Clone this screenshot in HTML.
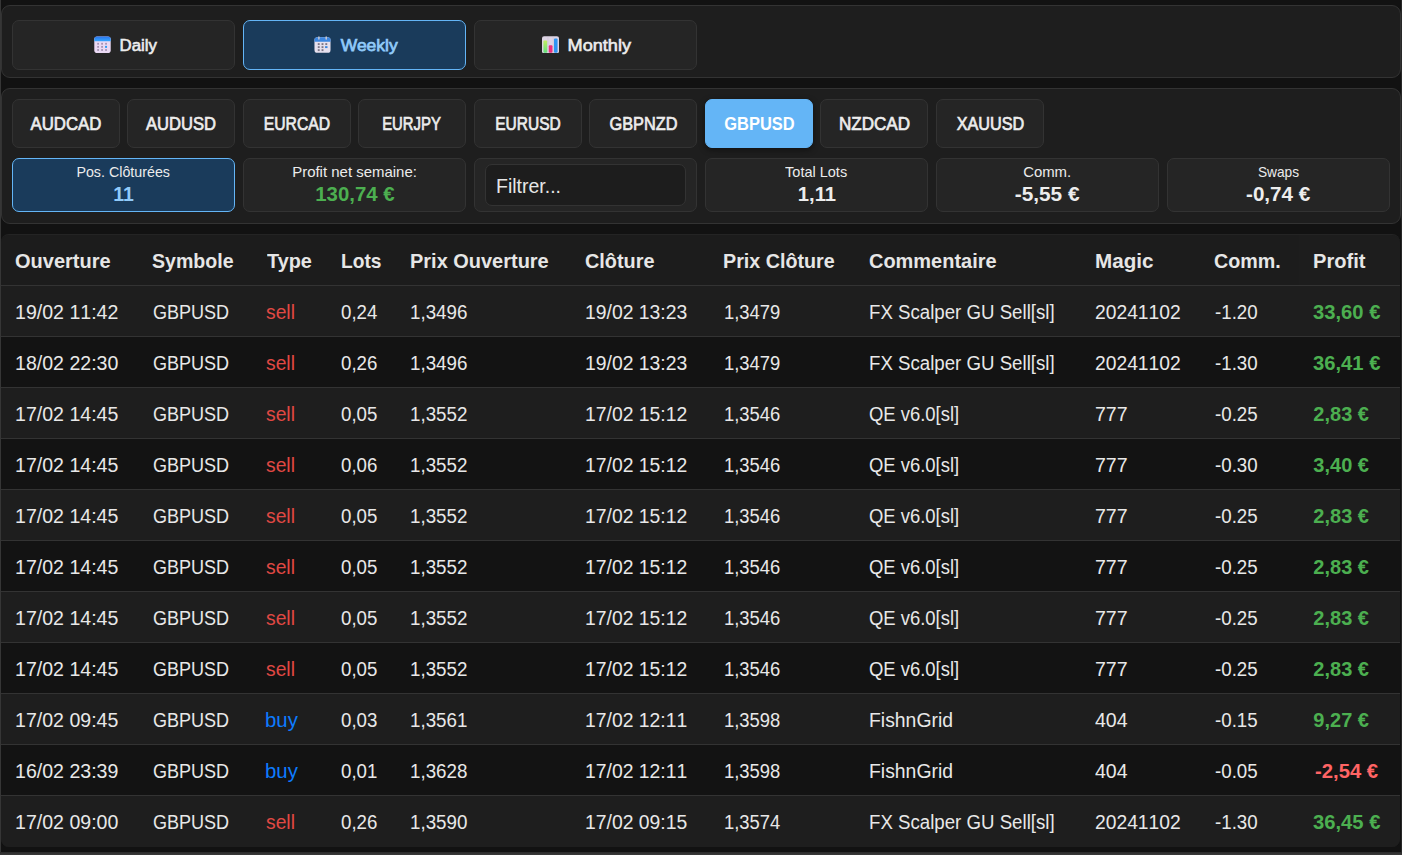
<!DOCTYPE html>
<html lang="fr">
<head>
<meta charset="utf-8">
<title>Trades</title>
<style>
*{box-sizing:border-box;margin:0;padding:0}
html,body{width:1402px;height:855px;overflow:hidden;background:#121212}
body{font-family:"Liberation Sans",sans-serif;color:#e6e6e6;position:relative}
.x{display:inline-block;transform-origin:0 50%;white-space:nowrap}
.c{display:inline-block;transform-origin:50% 50%;white-space:nowrap}
.edge-l{position:absolute;left:0;top:0;width:1px;height:855px;background:#363636}
.edge-b{position:absolute;left:0;top:852px;width:1402px;height:3px;background:linear-gradient(#2a2a2a,#3a3a3a)}
.edge-r{position:absolute;left:1401px;top:0;width:1px;height:852px;background:#282828}
.panel{position:absolute;left:1px;width:1400px;background:#1e1e1e;border:1px solid #333;border-radius:9px}
#p1{top:5px;height:73px}
#p2{top:88px;height:136px}
.tabs{position:absolute;left:10px;top:14px;width:1378px;display:grid;grid-template-columns:repeat(6,223px);column-gap:8px}
.tab{height:50px;background:#252525;border:1px solid #333;border-radius:7px;display:flex;align-items:center;justify-content:center;font-size:17.3px;color:#ededed;-webkit-text-stroke:.6px currentColor;padding:1px 0 0 3px}
.tab svg{width:17px;height:17.5px;margin-right:8.5px;flex:none;margin-top:-2px;position:relative;left:.7px}
.tab.on{background:#1a3b5b;border-color:#64b5f6;color:#90caf9;-webkit-text-stroke-width:.75px}
.syms{position:absolute;left:0;top:10px;width:1378px;height:49px}
.sym{position:absolute;top:0;width:108px;height:49px;background:#252525;border:1px solid #333;border-radius:7px;display:flex;align-items:center;justify-content:center;font-size:17.5px;color:#ededed;-webkit-text-stroke:.65px currentColor;padding-top:1px}
.sym.on{background:#64b5f6;border-color:#64b5f6;color:#fff;box-shadow:0 2px 6px rgba(0,0,0,.45);-webkit-text-stroke:0;font-weight:700}
.stats{position:absolute;left:10px;top:69px;width:1378px;display:grid;grid-template-columns:repeat(6,223px);column-gap:8px}
.stat{height:54px;background:#252525;border:1px solid #333;border-radius:7px;text-align:center}
.stat .l{font-size:15px;line-height:17px;margin-top:3.5px;color:#ececec}
.stat .v{font-size:20px;line-height:24px;font-weight:700;margin-top:2.5px;color:#ededed}
.stat.on{background:#1a3b5b;border-color:#64b5f6}
.stat.on .v{color:#90caf9}
.stat .v.g{color:#4caf50}
.stat.f{padding:5px 10px}
.inp{height:42px;background:#1d1d1d;border:1px solid #333;border-radius:7px;text-align:left;font-size:20.4px;line-height:42px;padding-left:10px;color:#e6e6e6;overflow:hidden}
table{position:absolute;left:1px;top:234px;width:1399px;border-collapse:separate;border-spacing:0;table-layout:fixed;background:#1c1c1c;border-radius:8px;overflow:hidden;border-top:1px solid #242424}
th,td{height:51px;text-align:left;padding:3px 0 0 14px;font-size:20px;white-space:nowrap;border-bottom:1px solid #333;vertical-align:middle}
th{font-weight:700;color:#e6e6e6;background:#1c1c1c;font-size:20.5px}
th{padding-top:2px}
th:last-child{background:#1d1d1d}
tbody tr:nth-child(odd) td{background:#1e1e1e}
tbody tr:nth-child(even) td{background:#131313}
tbody tr:last-child td{border-bottom-color:#1e1e1e}
td{color:#e8e8e8;font-kerning:none}
.s{color:#e04843}
.b{color:#0d7bff}
.p{color:#4caf50;font-weight:700}
.n{color:#ff6464;font-weight:700}
</style>
</head>
<body>
<div class="panel" id="p1">
 <div class="tabs">
  <div class="tab"><svg viewBox="0 0 18 18"><defs><linearGradient id="gd" x1="0" y1="0" x2="0" y2="1"><stop offset="0" stop-color="#2a74ee"/><stop offset="1" stop-color="#36a8ff"/></linearGradient></defs><rect x="0.3" y="0.3" width="17.4" height="17.4" rx="3" fill="#ead9f4"/><path d="M0.3 5.3V3.3a3 3 0 0 1 3-3h11.4a3 3 0 0 1 3 3v2z" fill="url(#gd)"/><g fill="#a492b2"><rect x="3.4" y="7" width="1.9" height="1.9"/><rect x="7.6" y="7" width="1.9" height="1.9"/><rect x="11.8" y="7" width="1.9" height="1.9"/><rect x="3.4" y="10.3" width="1.9" height="1.9"/><rect x="7.6" y="10.3" width="1.9" height="1.9"/><rect x="3.4" y="13.6" width="1.9" height="1.9"/><rect x="7.6" y="13.6" width="1.9" height="1.9"/><rect x="11.8" y="13.6" width="1.9" height="1.9"/></g><rect x="11.7" y="10.2" width="2.1" height="2.1" fill="#2f9bf6"/></svg><span class="c" style="transform:scaleX(0.973)">Daily</span></div>
  <div class="tab on"><svg style="left:-1.3px" viewBox="0 0 18 18"><rect x="0.5" y="1" width="17" height="16.5" rx="3" fill="#e6e0ee"/><path d="M0.5 5.8V4a3 3 0 0 1 3-3h11a3 3 0 0 1 3 3v1.8z" fill="#3c86e0"/><rect x="4.5" y="0" width="1.4" height="3.6" rx=".7" fill="#d8d0d0"/><rect x="12.2" y="0" width="1.4" height="3.6" rx=".7" fill="#d8d0d0"/><g fill="#7d7686"><rect x="4" y="7.3" width="2" height="2"/><rect x="8" y="7.3" width="2" height="2"/><rect x="12" y="7.3" width="2" height="2"/><rect x="4" y="10.5" width="2" height="2"/><rect x="8" y="10.5" width="2" height="2"/><rect x="4" y="13.7" width="2" height="2"/><rect x="8" y="13.7" width="2" height="2"/></g><rect x="11.7" y="10.5" width="2.6" height="2" fill="#3c86e0"/></svg><span class="c" style="transform:scaleX(1.010)">Weekly</span></div>
  <div class="tab"><svg style="left:-2.3px" viewBox="0 0 18 18"><rect x="0" y="0" width="18" height="18" rx="2.2" fill="#ddd4e4"/><path d="M6.3 0.5v17M11.9 0.5v17" stroke="#cdc3d6" stroke-width=".6"/><defs><linearGradient id="gm" x1="0" y1="0" x2="0" y2="1"><stop offset="0" stop-color="#c4ec62"/><stop offset="1" stop-color="#5fe07a"/></linearGradient></defs><rect x="1.5" y="4.5" width="4" height="13" rx="1" fill="url(#gm)"/><rect x="7.2" y="9.6" width="3.9" height="7.9" rx="1" fill="#ee2f7c"/><rect x="12.7" y="2.4" width="3.8" height="15.1" rx="1" fill="#2f95f3"/></svg><span class="c" style="transform:scaleX(1.048)">Monthly</span></div>
 </div>
</div>
<div class="panel" id="p2">
 <div class="syms"><div class="sym" style="left:10px"><span class="c" style="transform:scaleX(0.960)">AUDCAD</span></div><div class="sym" style="left:125px"><span class="c" style="transform:scaleX(0.947)">AUDUSD</span></div><div class="sym" style="left:241px"><span class="c" style="transform:scaleX(0.899)">EURCAD</span></div><div class="sym" style="left:356px"><span class="c" style="transform:scaleX(0.851)">EURJPY</span></div><div class="sym" style="left:472px"><span class="c" style="transform:scaleX(0.888)">EURUSD</span></div><div class="sym" style="left:587px"><span class="c" style="transform:scaleX(0.932)">GBPNZD</span></div><div class="sym on" style="left:703px"><span class="c" style="transform:scaleX(0.939)">GBPUSD</span></div><div class="sym" style="left:818px"><span class="c" style="transform:scaleX(0.976)">NZDCAD</span></div><div class="sym" style="left:934px"><span class="c" style="transform:scaleX(0.928)">XAUUSD</span></div></div>
 <div class="stats">
  <div class="stat on"><div class="l"><span class="c" style="transform:scaleX(0.951)">Pos. Clôturées</span></div><div class="v"><span class="c" style="transform:scaleX(0.974)">11</span></div></div>
  <div class="stat"><div class="l"><span class="c" style="transform:scaleX(0.997)">Profit net semaine:</span></div><div class="v g"><span class="c" style="transform:scaleX(1.019)">130,74 €</span></div></div>
  <div class="stat f"><div class="inp"><span class="x" style="transform:scaleX(0.956)">Filtrer...</span></div></div>
  <div class="stat"><div class="l"><span class="c" style="transform:scaleX(0.967)">Total Lots</span></div><div class="v"><span class="c" style="transform:scaleX(1.011)">1,11</span></div></div>
  <div class="stat"><div class="l"><span class="c" style="transform:scaleX(0.994)">Comm.</span></div><div class="v"><span class="c" style="transform:scaleX(1.041)">-5,55 €</span></div></div>
  <div class="stat"><div class="l"><span class="c" style="transform:scaleX(0.914)">Swaps</span></div><div class="v"><span class="c" style="transform:scaleX(1.032)">-0,74 €</span></div></div>
 </div>
</div>
<table>
<colgroup><col style="width:137.5px"><col style="width:114px"><col style="width:74.8px"><col style="width:69.1px"><col style="width:174.3px"><col style="width:139.1px"><col style="width:145.1px"><col style="width:226.4px"><col style="width:118.9px"><col style="width:99.2px"><col style="width:100.6px"></colgroup>
<thead><tr><th><span class="x" style="transform:scaleX(0.976)">Ouverture</span></th><th><span class="x" style="transform:scaleX(0.955);position:relative;left:-0.4px">Symbole</span></th><th><span class="x" style="transform:scaleX(0.969)">Type</span></th><th><span class="x" style="transform:scaleX(0.936)">Lots</span></th><th><span class="x" style="transform:scaleX(0.974)">Prix Ouverture</span></th><th><span class="x" style="transform:scaleX(0.969)">Clôture</span></th><th><span class="x" style="transform:scaleX(0.961);position:relative;left:-0.8px">Prix Clôture</span></th><th><span class="x" style="transform:scaleX(0.974)">Commentaire</span></th><th><span class="x" style="transform:scaleX(1.007);position:relative;left:-0.5px">Magic</span></th><th><span class="x" style="transform:scaleX(0.961)">Comm.</span></th><th><span class="x" style="transform:scaleX(0.979)">Profit</span></th></tr></thead>
<tbody>
<tr><td><span class="x" style="transform:scaleX(0.978)">19/02 11:42</span></td><td><span class="x" style="transform:scaleX(0.901)">GBPUSD</span></td><td class="s"><span class="x" style="transform:scaleX(0.964);position:relative;left:-1px">sell</span></td><td><span class="x" style="transform:scaleX(0.933)">0,24</span></td><td><span class="x" style="transform:scaleX(0.938)">1,3496</span></td><td><span class="x" style="transform:scaleX(0.968);position:relative;left:0.6px">19/02 13:23</span></td><td><span class="x" style="transform:scaleX(0.921);position:relative;left:0.6px">1,3479</span></td><td><span class="x" style="transform:scaleX(0.933)">FX Scalper GU Sell[sl]</span></td><td><span class="x" style="transform:scaleX(0.963)">20241102</span></td><td><span class="x" style="transform:scaleX(0.935);position:relative;left:1.2px">-1.20</span></td><td class="p"><span class="x" style="transform:scaleX(1.010)">33,60 €</span></td></tr>
<tr><td><span class="x" style="transform:scaleX(0.978)">18/02 22:30</span></td><td><span class="x" style="transform:scaleX(0.901)">GBPUSD</span></td><td class="s"><span class="x" style="transform:scaleX(0.964);position:relative;left:-1px">sell</span></td><td><span class="x" style="transform:scaleX(0.933)">0,26</span></td><td><span class="x" style="transform:scaleX(0.938)">1,3496</span></td><td><span class="x" style="transform:scaleX(0.968);position:relative;left:0.6px">19/02 13:23</span></td><td><span class="x" style="transform:scaleX(0.921);position:relative;left:0.6px">1,3479</span></td><td><span class="x" style="transform:scaleX(0.933)">FX Scalper GU Sell[sl]</span></td><td><span class="x" style="transform:scaleX(0.963)">20241102</span></td><td><span class="x" style="transform:scaleX(0.935);position:relative;left:1.2px">-1.30</span></td><td class="p"><span class="x" style="transform:scaleX(1.010)">36,41 €</span></td></tr>
<tr><td><span class="x" style="transform:scaleX(0.978)">17/02 14:45</span></td><td><span class="x" style="transform:scaleX(0.901)">GBPUSD</span></td><td class="s"><span class="x" style="transform:scaleX(0.964);position:relative;left:-1px">sell</span></td><td><span class="x" style="transform:scaleX(0.933)">0,05</span></td><td><span class="x" style="transform:scaleX(0.938)">1,3552</span></td><td><span class="x" style="transform:scaleX(0.968);position:relative;left:0.6px">17/02 15:12</span></td><td><span class="x" style="transform:scaleX(0.921);position:relative;left:0.6px">1,3546</span></td><td><span class="x" style="transform:scaleX(0.922)">QE v6.0[sl]</span></td><td><span class="x" style="transform:scaleX(0.977)">777</span></td><td><span class="x" style="transform:scaleX(0.935);position:relative;left:1.2px">-0.25</span></td><td class="p"><span class="x">2,83 €</span></td></tr>
<tr><td><span class="x" style="transform:scaleX(0.978)">17/02 14:45</span></td><td><span class="x" style="transform:scaleX(0.901)">GBPUSD</span></td><td class="s"><span class="x" style="transform:scaleX(0.964);position:relative;left:-1px">sell</span></td><td><span class="x" style="transform:scaleX(0.933)">0,06</span></td><td><span class="x" style="transform:scaleX(0.938)">1,3552</span></td><td><span class="x" style="transform:scaleX(0.968);position:relative;left:0.6px">17/02 15:12</span></td><td><span class="x" style="transform:scaleX(0.921);position:relative;left:0.6px">1,3546</span></td><td><span class="x" style="transform:scaleX(0.922)">QE v6.0[sl]</span></td><td><span class="x" style="transform:scaleX(0.977)">777</span></td><td><span class="x" style="transform:scaleX(0.935);position:relative;left:1.2px">-0.30</span></td><td class="p"><span class="x">3,40 €</span></td></tr>
<tr><td><span class="x" style="transform:scaleX(0.978)">17/02 14:45</span></td><td><span class="x" style="transform:scaleX(0.901)">GBPUSD</span></td><td class="s"><span class="x" style="transform:scaleX(0.964);position:relative;left:-1px">sell</span></td><td><span class="x" style="transform:scaleX(0.933)">0,05</span></td><td><span class="x" style="transform:scaleX(0.938)">1,3552</span></td><td><span class="x" style="transform:scaleX(0.968);position:relative;left:0.6px">17/02 15:12</span></td><td><span class="x" style="transform:scaleX(0.921);position:relative;left:0.6px">1,3546</span></td><td><span class="x" style="transform:scaleX(0.922)">QE v6.0[sl]</span></td><td><span class="x" style="transform:scaleX(0.977)">777</span></td><td><span class="x" style="transform:scaleX(0.935);position:relative;left:1.2px">-0.25</span></td><td class="p"><span class="x">2,83 €</span></td></tr>
<tr><td><span class="x" style="transform:scaleX(0.978)">17/02 14:45</span></td><td><span class="x" style="transform:scaleX(0.901)">GBPUSD</span></td><td class="s"><span class="x" style="transform:scaleX(0.964);position:relative;left:-1px">sell</span></td><td><span class="x" style="transform:scaleX(0.933)">0,05</span></td><td><span class="x" style="transform:scaleX(0.938)">1,3552</span></td><td><span class="x" style="transform:scaleX(0.968);position:relative;left:0.6px">17/02 15:12</span></td><td><span class="x" style="transform:scaleX(0.921);position:relative;left:0.6px">1,3546</span></td><td><span class="x" style="transform:scaleX(0.922)">QE v6.0[sl]</span></td><td><span class="x" style="transform:scaleX(0.977)">777</span></td><td><span class="x" style="transform:scaleX(0.935);position:relative;left:1.2px">-0.25</span></td><td class="p"><span class="x">2,83 €</span></td></tr>
<tr><td><span class="x" style="transform:scaleX(0.978)">17/02 14:45</span></td><td><span class="x" style="transform:scaleX(0.901)">GBPUSD</span></td><td class="s"><span class="x" style="transform:scaleX(0.964);position:relative;left:-1px">sell</span></td><td><span class="x" style="transform:scaleX(0.933)">0,05</span></td><td><span class="x" style="transform:scaleX(0.938)">1,3552</span></td><td><span class="x" style="transform:scaleX(0.968);position:relative;left:0.6px">17/02 15:12</span></td><td><span class="x" style="transform:scaleX(0.921);position:relative;left:0.6px">1,3546</span></td><td><span class="x" style="transform:scaleX(0.922)">QE v6.0[sl]</span></td><td><span class="x" style="transform:scaleX(0.977)">777</span></td><td><span class="x" style="transform:scaleX(0.935);position:relative;left:1.2px">-0.25</span></td><td class="p"><span class="x">2,83 €</span></td></tr>
<tr><td><span class="x" style="transform:scaleX(0.978)">17/02 14:45</span></td><td><span class="x" style="transform:scaleX(0.901)">GBPUSD</span></td><td class="s"><span class="x" style="transform:scaleX(0.964);position:relative;left:-1px">sell</span></td><td><span class="x" style="transform:scaleX(0.933)">0,05</span></td><td><span class="x" style="transform:scaleX(0.938)">1,3552</span></td><td><span class="x" style="transform:scaleX(0.968);position:relative;left:0.6px">17/02 15:12</span></td><td><span class="x" style="transform:scaleX(0.921);position:relative;left:0.6px">1,3546</span></td><td><span class="x" style="transform:scaleX(0.922)">QE v6.0[sl]</span></td><td><span class="x" style="transform:scaleX(0.977)">777</span></td><td><span class="x" style="transform:scaleX(0.935);position:relative;left:1.2px">-0.25</span></td><td class="p"><span class="x">2,83 €</span></td></tr>
<tr><td><span class="x" style="transform:scaleX(0.978)">17/02 09:45</span></td><td><span class="x" style="transform:scaleX(0.901)">GBPUSD</span></td><td class="b"><span class="x" style="transform:scaleX(1.018);position:relative;left:-1.2px">buy</span></td><td><span class="x" style="transform:scaleX(0.933)">0,03</span></td><td><span class="x" style="transform:scaleX(0.938)">1,3561</span></td><td><span class="x" style="transform:scaleX(0.968);position:relative;left:0.6px">17/02 12:11</span></td><td><span class="x" style="transform:scaleX(0.921);position:relative;left:0.6px">1,3598</span></td><td><span class="x" style="transform:scaleX(0.969)">FishnGrid</span></td><td><span class="x" style="transform:scaleX(0.977)">404</span></td><td><span class="x" style="transform:scaleX(0.935);position:relative;left:1.2px">-0.15</span></td><td class="p"><span class="x">9,27 €</span></td></tr>
<tr><td><span class="x" style="transform:scaleX(0.978)">16/02 23:39</span></td><td><span class="x" style="transform:scaleX(0.901)">GBPUSD</span></td><td class="b"><span class="x" style="transform:scaleX(1.018);position:relative;left:-1.2px">buy</span></td><td><span class="x" style="transform:scaleX(0.933)">0,01</span></td><td><span class="x" style="transform:scaleX(0.938)">1,3628</span></td><td><span class="x" style="transform:scaleX(0.968);position:relative;left:0.6px">17/02 12:11</span></td><td><span class="x" style="transform:scaleX(0.921);position:relative;left:0.6px">1,3598</span></td><td><span class="x" style="transform:scaleX(0.969)">FishnGrid</span></td><td><span class="x" style="transform:scaleX(0.977)">404</span></td><td><span class="x" style="transform:scaleX(0.935);position:relative;left:1.2px">-0.05</span></td><td class="n"><span class="x" style="transform:scaleX(1.014);position:relative;left:1.4px">-2,54 €</span></td></tr>
<tr><td><span class="x" style="transform:scaleX(0.978)">17/02 09:00</span></td><td><span class="x" style="transform:scaleX(0.901)">GBPUSD</span></td><td class="s"><span class="x" style="transform:scaleX(0.964);position:relative;left:-1px">sell</span></td><td><span class="x" style="transform:scaleX(0.933)">0,26</span></td><td><span class="x" style="transform:scaleX(0.938)">1,3590</span></td><td><span class="x" style="transform:scaleX(0.968);position:relative;left:0.6px">17/02 09:15</span></td><td><span class="x" style="transform:scaleX(0.921);position:relative;left:0.6px">1,3574</span></td><td><span class="x" style="transform:scaleX(0.933)">FX Scalper GU Sell[sl]</span></td><td><span class="x" style="transform:scaleX(0.963)">20241102</span></td><td><span class="x" style="transform:scaleX(0.935);position:relative;left:1.2px">-1.30</span></td><td class="p"><span class="x" style="transform:scaleX(1.010)">36,45 €</span></td></tr>
</tbody>
</table>
<div class="edge-l"></div><div class="edge-r"></div><div class="edge-b"></div>
</body>
</html>
